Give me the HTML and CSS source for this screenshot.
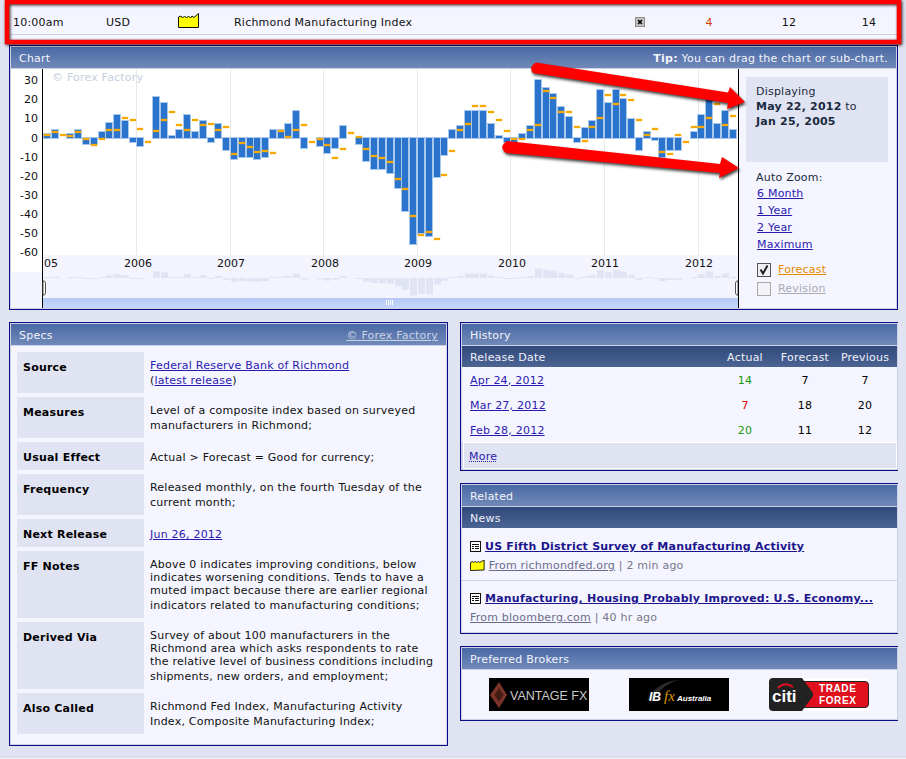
FILE: index.html
```html
<!DOCTYPE html>
<html lang="en">
<head>
<meta charset="utf-8">
<title>Richmond Manufacturing Index</title>
<link rel="stylesheet" href="styles.css">
</head>
<body>
<div class="event-row">
  <span>10:00am</span>
  <span>USD</span>
  <svg class="factory" width="21" height="15" viewBox="0 0 21 15"><path class="factory-fill" d="M.5 14.500V4L3 3l1.500 2 2-2 2 2 2-2 2 2L14 3l2 1.500L20.500.5V14.500z"/></svg>
  <span>Richmond Manufacturing Index</span>
  <svg class="xbox" width="10" height="10" viewBox="0 0 10 10"><rect class="xbox-bg" x=".5" y=".5" width="9" height="9"/><path class="xbox-x" d="M3 3l4 4M7 3l-4 4"/></svg>
  <span class="num actual-down">4</span>
  <span class="num">12</span>
  <span class="num last">14</span>
</div>

<section class="panel chart-panel">
  <header class="panel-head"><span>Chart</span><span><b>Tip:</b> You can drag the chart or sub-chart.</span></header>
  <div class="chart-body">
    <svg class="chart" id="chart" width="727" height="239" viewBox="11 69 727 239">
      <defs>
        <linearGradient id="slider" x1="0" y1="0" x2="0" y2="1"><stop offset="0" stop-color="#b4c9f6"/><stop offset="1" stop-color="#c6d7fb"/></linearGradient>
      </defs>
      <rect class="bg-white" x="11" y="69" width="727" height="239"/>
      <rect class="bg-soft" x="43" y="255" width="695" height="53"/>
      <rect class="bg-soft" x="11" y="272" width="32" height="36"/>
      <g id="grid"></g>
      <text class="wm" x="52" y="81">© Forex Factory</text>
      <g class="ylab">
        <text x="38" y="84">30</text><text x="38" y="103">20</text><text x="38" y="122">10</text><text x="38" y="142">0</text>
        <text x="38" y="161">-10</text><text x="38" y="180">-20</text><text x="38" y="199">-30</text><text x="38" y="218">-40</text>
        <text x="38" y="237">-50</text><text x="38" y="256">-60</text>
      </g>
      <g class="xlab">
        <text x="44" y="267">05</text><text x="124" y="267">2006</text><text x="217" y="267">2007</text><text x="311" y="267">2008</text>
        <text x="404" y="267">2009</text><text x="498" y="267">2010</text><text x="591" y="267">2011</text><text x="685" y="267">2012</text>
      </g>
      <g id="mini"></g>
      <g id="bars"></g>
      <rect x="43" y="298" width="695" height="10" fill="url(#slider)"/>
      <path class="grip" d="M386.500 300v5M388.500 300v5M390.500 300v5M392.500 300v5"/>
      <rect class="axis" x="42" y="69" width="1" height="239"/>
      <path class="handle" d="M43 281h1.500l1 2v10l-1 2H43z"/>
      <path class="handle" d="M738 281h-1.500l-1 2v10l1 2h1.500z"/>
    </svg>
    <aside class="chart-side">
      <div class="range-box">
        <div>Displaying</div>
        <div><b>May 22, 2012</b> to</div>
        <div><b>Jan 25, 2005</b></div>
      </div>
      <div class="zoom-title">Auto Zoom:</div>
      <ul class="zoom-list">
        <li><a href="#">6 Month</a></li>
        <li><a href="#">1 Year</a></li>
        <li><a href="#">2 Year</a></li>
        <li><a href="#">Maximum</a></li>
      </ul>
      <div class="toggle">
        <svg width="14" height="14" viewBox="0 0 14 14"><rect class="cb-on" x=".5" y=".5" width="13" height="13"/><path class="cb-mark" d="M3.500 6.500l2.500 4 4.500-8"/></svg>
        <a class="link-forecast" href="#">Forecast</a>
      </div>
      <div class="toggle">
        <svg width="14" height="14" viewBox="0 0 14 14"><rect class="cb-off" x=".5" y=".5" width="13" height="13"/></svg>
        <a class="link-revision" href="#">Revision</a>
      </div>
    </aside>
  </div>
</section>

<div class="columns">
  <section class="panel specs-panel">
    <header class="panel-head"><span>Specs</span><a class="head-link" href="#">© Forex Factory</a></header>
    <div class="specs">
      <div class="spec-row"><div class="spec-label">Source</div><div class="spec-value"><span class="ln"><a href="#">Federal Reserve Bank of Richmond</a></span><span class="ln-last">(<a href="#">latest release</a>)</span></div></div>
      <div class="spec-row"><div class="spec-label">Measures</div><div class="spec-value"><span class="ln">Level of a composite index based on surveyed</span><span class="ln-last">manufacturers in Richmond;</span></div></div>
      <div class="spec-row"><div class="spec-label">Usual Effect</div><div class="spec-value"><span class="ln-last">Actual &gt; Forecast = Good for currency;</span></div></div>
      <div class="spec-row"><div class="spec-label">Frequency</div><div class="spec-value"><span class="ln">Released monthly, on the fourth Tuesday of the</span><span class="ln-last">current month;</span></div></div>
      <div class="spec-row"><div class="spec-label">Next Release</div><div class="spec-value"><span class="ln-last"><a href="#">Jun 26, 2012</a></span></div></div>
      <div class="spec-row"><div class="spec-label">FF Notes</div><div class="spec-value"><span class="ln">Above 0 indicates improving conditions, below</span><span class="ln">indicates worsening conditions. Tends to have a</span><span class="ln">muted impact because there are earlier regional</span><span class="ln-last">indicators related to manufacturing conditions;</span></div></div>
      <div class="spec-row"><div class="spec-label">Derived Via</div><div class="spec-value"><span class="ln">Survey of about 100 manufacturers in the</span><span class="ln">Richmond area which asks respondents to rate</span><span class="ln">the relative level of business conditions including</span><span class="ln-last">shipments, new orders, and employment;</span></div></div>
      <div class="spec-row"><div class="spec-label">Also Called</div><div class="spec-value"><span class="ln">Richmond Fed Index, Manufacturing Activity</span><span class="ln-last">Index, Composite Manufacturing Index;</span></div></div>
    </div>
  </section>

  <div class="right-col">
    <section class="panel open-right">
      <header class="panel-head"><span>History</span></header>
      <div class="hist-grid sub-head"><span>Release Date</span><span class="c">Actual</span><span class="c">Forecast</span><span class="c">Previous</span></div>
      <div class="hist-grid hist-row"><a href="#">Apr 24, 2012</a><span class="c good">14</span><span class="c">7</span><span class="c">7</span></div>
      <div class="hist-grid hist-row"><a href="#">Mar 27, 2012</a><span class="c bad">7</span><span class="c">18</span><span class="c">20</span></div>
      <div class="hist-grid hist-row"><a href="#">Feb 28, 2012</a><span class="c good">20</span><span class="c">11</span><span class="c">12</span></div>
      <div class="more"><a href="#">More</a></div>
    </section>

    <section class="panel open-right">
      <header class="panel-head"><span>Related</span></header>
      <div class="sub-head news-head">News</div>
      <article class="news-item">
        <div class="news-title">
          <svg width="11" height="11" viewBox="0 0 11 11"><use href="#news-icon"/></svg>
          <a href="#">US Fifth District Survey of Manufacturing Activity</a>
        </div>
        <div class="news-meta">
          <svg class="factory-small" width="15" height="11" viewBox="0 0 17 11" preserveAspectRatio="none"><path class="factory-fill" d="M.5 10.500V2.500l2.500-1 1 1 2-1 1.500 1 2-1 1.500 1 2-1 3-1.500v10z"/></svg>
          <a href="#">From richmondfed.org</a> | 2 min ago
        </div>
      </article>
      <article class="news-item last-item">
        <div class="news-title">
          <svg width="11" height="11" viewBox="0 0 11 11"><g id="news-icon"><rect class="news-box" x=".5" y=".5" width="10" height="10"/><path class="news-lines" d="M2 3.500h7M2 5.500h2M5 5.500h4M2 7.500h2M5 7.500h4"/></g></svg>
          <a href="#">Manufacturing, Housing Probably Improved: U.S. Economy...</a>
        </div>
        <div class="news-meta"><a href="#">From bloomberg.com</a> | 40 hr ago</div>
      </article>
    </section>

    <section class="panel open-right">
      <header class="panel-head"><span>Preferred Brokers</span></header>
      <div class="logos">
        <svg class="logo" width="100" height="33" viewBox="0 0 100 33">
          <rect width="100" height="33" fill="#000"/>
          <path d="M10 4L18 17 10 30 1 17z" fill="#7a3428"/>
          <path d="M10 10l4.500 7L10 24 5.500 17z" fill="#000" opacity=".45"/>
          <text class="logo-vantage" x="21" y="22">VANTAGE FX</text>
        </svg>
        <svg class="logo" width="100" height="33" viewBox="0 0 100 33">
          <rect width="100" height="33" fill="#000"/>
          <path d="M18 22C24 10 36 3 50 2 42 4 30 10 25 22z" fill="#2b2b2b"/>
          <text class="logo-ib" x="20" y="23">IB</text>
          <text class="logo-fx" x="35" y="23">fx</text>
          <text class="logo-au" x="48" y="23">Australia</text>
        </svg>
        <svg class="logo" width="100" height="33" viewBox="0 0 100 33">
          <rect width="100" height="33" fill="#fff"/>
          <path d="M30 3.500H96q3.500 0 3.500 3.500V26q0 3.500-3.500 3.500H30z" fill="#e0101c" stroke="#222"/>
          <path d="M4 0H33L44 15V18L33 33H4Q0 33 0 29V4Q0 0 4 0z" fill="#222"/>
          <path d="M9 10Q16 3 24 9" class="citi-arc"/>
          <text class="logo-citi" x="3" y="24">citi</text>
          <text class="logo-trade" x="50" y="14">TRADE</text>
          <text class="logo-trade" x="50" y="26">FOREX</text>
        </svg>
      </div>
    </section>
  </div>
</div>
<footer class="page-rule"></footer>

<svg class="overlay" width="906" height="759" viewBox="0 0 906 759">
  <rect class="mark-frame" x="7" y="2" width="892" height="40"/>
  <path class="mark-arrow" d="M536 62.500L728 92.500 730 87 745 102 727 109 728 103 533 73Q528 67 536 62.500z"/>
  <path class="mark-arrow" d="M507 141L720 164 722 157 739 168 719 178 720 173 506 153Q498 147 507 141z"/>
</svg>
<script src="chart.js"></script>
</body>
</html>
```

FILE: styles.css
```css
* { box-sizing: border-box; }
html, body { margin: 0; padding: 0; }
body {
  position: relative;
  height: 759px;
  overflow: hidden;
  background: #e0e3f1;
  font: 11px/15px "DejaVu Sans", Verdana, sans-serif;
  letter-spacing: .22px;
  color: #151520;
}
a { color: #2b1ab0; }
ul { list-style: none; margin: 0; padding: 0; }
svg text { letter-spacing: 0; }

.event-row {
  display: grid;
  grid-template-columns: 93px 72px 56px 401px 34px 80px 80px 68px;
  align-items: center;
  margin-left: 9px;
  width: 889px;
  height: 35px;
  padding: 11px 0 0 4px;
  background: #f4f5fe;
  border-bottom: 1px solid #cdd0e2;
  color: #111;
  box-shadow: 0 5px 0 #f4f5fe;
}
.factory { margin-top: -4px; }
.factory-fill { fill: #ffff00; stroke: #111; stroke-width: 1; }
.xbox { margin-top: -2px; }
.xbox-bg { fill: #c4c4c4; stroke: #8a8a8a; }
.xbox-x { stroke: #000; stroke-width: 1.6; fill: none; }
.num { text-align: center; }
.num.last { padding-left: 12px; }
.actual-down { color: #d23a00; }

.panel {
  border: 1px solid #0a0d84;
  padding: 1px;
  background: #cdd1e8;
}
.panel-head {
  display: flex;
  justify-content: space-between;
  height: 22px;
  padding: 4px 8px 0;
  border-bottom: 1px solid #cdd1e8;
  background: linear-gradient(#4a69a5, #7089b8);
  color: #f2f4fb;
}
.head-link { color: #c9d3e8; }
.chart-panel { width: 889px; margin: 10px 0 12px 9px; }
.chart-body { display: flex; height: 239px; background: #f4f5fe; }
.chart { display: block; flex: none; }
.bg-white { fill: #fff; }
.bg-soft { fill: #f3f4fe; }
.wm { fill: #c6cee2; font-size: 11px; letter-spacing: .2px; }
.ylab text { text-anchor: end; font-size: 11px; fill: #111; }
.xlab text { font-size: 11px; fill: #111; }
.gridline { stroke: #e9e9e9; stroke-width: 1; }
.bar { fill: #2a74cd; stroke: #a9c8ee; stroke-width: 1; }
.fc { fill: #f8a900; stroke: rgba(248, 169, 0, .3); stroke-width: 1; }
.mini-bar { fill: #e1e4f2; }
.grip { stroke: #fff; stroke-width: 1; fill: none; }
.axis { fill: #000; }
.handle { fill: #fff; stroke: #555; stroke-width: 1; }

.chart-side { width: 158px; border-left: 1px solid #000; padding-top: 8px; }
.range-box {
  width: 142px;
  height: 85px;
  margin-left: 7px;
  padding: 7px 10px;
  background: #e0e3f1;
  color: #1a2a40;
}
.zoom-title { margin: 8px 0 0 17px; color: #1a2a40; }
.zoom-list { margin: 0 0 7px 18px; }
.zoom-list li { height: 17px; line-height: 17px; }
.toggle { display: flex; align-items: center; gap: 7px; height: 19px; margin-left: 18px; }
.cb-on { fill: #eef0f6; stroke: #555; }
.cb-mark { fill: none; stroke: #222; stroke-width: 2; }
.cb-off { fill: #f2f3f8; stroke: #aaa; }
.link-forecast { color: #e88a00; }
.link-revision { color: #aaaab4; }

.columns { display: flex; gap: 12px; padding-left: 9px; align-items: flex-start; }
.specs-panel { width: 439px; }
.specs { display: flex; flex-direction: column; gap: 4px; padding: 6px 6px 10px; background: #f4f5fe; }
.spec-row { display: grid; grid-template-columns: 127px 1fr; column-gap: 6px; }
.spec-label { padding: 8px 6px 5px; background: #e0e3f1; font-weight: 700; color: #000; }
.spec-value { padding: 7px 0 6px; color: #111; white-space: nowrap; }
.ln { display: block; line-height: 13px; }
.ln-last { display: block; line-height: 15px; padding-top: 1px; margin-bottom: -1px; }

.right-col { display: flex; flex-direction: column; gap: 12px; width: 438px; }
.open-right { border-right: 0; }
.hist-grid { display: grid; grid-template-columns: 1fr 60px 60px 60px; padding: 1px 2px 0 8px; align-items: center; }
.c { text-align: center; }
.sub-head {
  height: 21px;
  background: linear-gradient(#31487c, #4b6492);
  color: #eef1f9;
}
.hist-row { height: 25px; background: #f4f5fe; color: #000; }
.good { color: #1a9a10; }
.bad { color: #d80000; }
.more {
  height: 27px;
  padding: 6px 5px 4px;
  background: #e0e3f1;
  border: 1px solid #fff;
  margin-left: 1px;
}
.more a { text-decoration: underline dotted; }
.news-head { padding: 4px 8px 0; }
.news-item { height: 53px; padding: 11px 8px 0; background: #f4f5fe; border-bottom: 1px solid #cdd1e8; }
.last-item { height: 51px; padding-top: 10px; border-bottom: 0; }
.news-title { display: flex; align-items: center; gap: 4px; font-weight: 700; }
.news-title a { color: #1d158c; }
.news-meta { margin-top: 4px; color: #77778a; }
.news-meta a { color: #6c6c8a; }
.factory-small { vertical-align: -2px; }
.news-box { fill: #fff; stroke: #111; }
.news-lines { stroke: #111; stroke-width: 1; fill: none; }

.logos { display: flex; justify-content: center; gap: 40px; height: 49px; padding: 8px 1px 0 0; background: #f4f5fe; }
.logo { display: block; flex: none; }
.logo-vantage { font: 12.500px "Liberation Sans", sans-serif; fill: #c9c9c9; }
.logo-ib { font: italic 700 12px "Liberation Sans", sans-serif; fill: #fff; }
.logo-fx { font: italic 15px "Liberation Serif", serif; fill: #d99a00; }
.logo-au { font: italic 700 8px "Liberation Sans", sans-serif; fill: #fff; }
.citi-arc { fill: none; stroke: #e0101c; stroke-width: 2; }
.logo-citi { font: 700 17px "Liberation Sans", sans-serif; fill: #fff; }
.logo-trade { font: 700 10px "Liberation Sans", sans-serif; fill: #fff; letter-spacing: .6px; }

.page-rule { height: 3px; margin-top: 10px; border-top: 1px solid #d3d5e5; background: #e8e9f3; }

.overlay { position: absolute; left: 0; top: 0; pointer-events: none; }
.mark-frame { fill: none; stroke: #f00; stroke-width: 4.500; filter: drop-shadow(1px 1px 1.500px rgba(0, 0, 0, .8)); }
.mark-arrow { fill: #f00; filter: drop-shadow(1px 2px 1.500px rgba(0, 0, 0, .75)); }
```

FILE: chart.js
```js
// Pairs of [actual, forecast], one per month from Jan 2005 to May 2012.
var DATA = [
  [2,1.5],[4,3],[0,1.5],[2,1],[4,3],[-3,-.5],[-3,-3.500],[3,-.5],[8,4],[12,4],[9,10.500],[-2,9.500],
  [-4,4.500],[0,-2.300],[21,3.500],[18,9.500],[1,13.500],[4,6.500],[12,4],[3,9.500],[9,6.500],[-2,7.500],[7,4],[-6,5.500],
  [-11,-8.500],[-10,-2.500],[-10,-4.500],[-11,-7.500],[-10,-6.500],[4,-8],[4,3.500],[7,.5],[14,4],[-5,6.500],[0,-2.300],[-4,-.5],
  [-8,-3.500],[-5,-10.500],[6,-5.500],[0,2.500],[-3,.5],[-12,-5.500],[-16,-9.500],[-16,-10.500],[-18,-12.500],[-26,-21.500],[-38,-26.500],[-55,-40.500],
  [-49,-50.500],[-51,-48.500],[-20,-52.500],[-9,-19],[4,-6.500],[6,4],[14,7.500],[14,16.500],[14,16.500],[7,13.500],[1,9.500],[-2,3.500],
  [-2,-.5],[2,-.5],[6,4],[30,6.500],[26,24.500],[23,20.500],[16,13.500],[11,13.500],[-2,5.500],[5,-1.500],[9,5.500],[25,10.500],
  [18,22.500],[25,17.500],[20,22.500],[10,19.500],[-6,9.500],[3,1.500],[-1,4.500],[-10,-7.500],[-6,-8.500],[-6,1.500],[0,-2.300],[3,5.500],
  [12,5.500],[20,10.500],[7,17.500],[14,6.500],[4,11.500]
];
var ZERO = 138, UNIT = 1.93, X0 = 47, STEP = 7.79, MINI_ZERO = 278, MINI_UNIT = 0.32;
var NS = 'http://www.w3.org/2000/svg';

function el(parent, name, cls, attrs) {
  var node = document.createElementNS(NS, name);
  node.setAttribute('class', cls);
  for (var k in attrs) node.setAttribute(k, attrs[k]);
  parent.appendChild(node);
}

var grid = document.getElementById('grid');
[136, 230, 323, 417, 510, 604, 698].forEach(function (x) {
  el(grid, 'line', 'gridline', { x1: x + .5, x2: x + .5, y1: 69, y2: 255 });
});

var bars = document.getElementById('bars');
var mini = document.getElementById('mini');
var forecasts = [];
DATA.forEach(function (d, i) {
  var x = Math.round(X0 + STEP * i) - 3;
  var h = Math.round(Math.abs(d[0]) * UNIT);
  if (h) {
    el(bars, 'rect', 'bar', { x: x - .5, y: (d[0] > 0 ? ZERO - h : ZERO) - .5, width: 7, height: h + 1 });
    var mh = Math.max(Math.abs(d[0]) * MINI_UNIT, 1);
    el(mini, 'rect', 'mini-bar', { x: x, y: d[0] > 0 ? MINI_ZERO - mh : MINI_ZERO, width: 7, height: mh });
  }
  forecasts.push({ x: x, y: Math.round(ZERO - d[1] * UNIT) - 1 });
});
forecasts.forEach(function (f) {
  el(bars, 'rect', 'fc', { x: f.x, y: f.y, width: 6, height: 2 });
});
```
